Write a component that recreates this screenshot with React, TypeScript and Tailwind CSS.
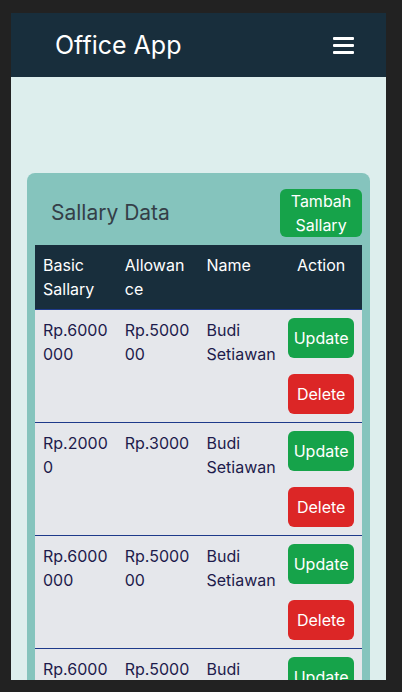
type Sallary = {
  basic: string;
  allowance: string;
  name: string;
};

const rows: Sallary[] = [
  { basic: "Rp.6000000", allowance: "Rp.500000", name: "Budi Setiawan" },
  { basic: "Rp.20000", allowance: "Rp.3000", name: "Budi Setiawan" },
  { basic: "Rp.6000000", allowance: "Rp.500000", name: "Budi Setiawan" },
  { basic: "Rp.6000000", allowance: "Rp.500000", name: "Budi Setiawan" },
];

function Navbar() {
  return (
    <nav className="flex h-16 shrink-0 items-center justify-between bg-[#182e3c] pl-11 pr-8">
      <span className="text-[25px] leading-8 text-white">Office App</span>
      <button aria-label="Menu" className="flex w-[21px] flex-col gap-1">
        <span className="block h-[3px] w-full rounded-[1px] bg-white" />
        <span className="block h-[3px] w-full rounded-[1px] bg-white" />
        <span className="block h-[3px] w-full rounded-[1px] bg-white" />
      </button>
    </nav>
  );
}

export default function App() {
  return (
    <div className="h-[692px] w-[402px] overflow-hidden bg-[#222222] pl-[11px] pt-[13px] font-['Inter',sans-serif]">
      <div className="flex h-[667px] w-[375px] flex-col overflow-hidden bg-[#ddeeed]">
        <Navbar />
        <main className="px-4 pt-24">
          <div className="rounded-lg bg-[#85c4bd] px-2 pt-4 pb-4">
            <div className="flex items-center justify-between">
              <h2 className="pl-4 text-[21px] leading-7 text-[#343f48]">Sallary Data</h2>
              <button className="w-[82px] rounded-md bg-[#16a34a] px-1 text-base leading-6 text-white">
                Tambah Sallary
              </button>
            </div>
            <table className="mt-2 w-full table-fixed border-collapse text-base leading-6">
              <thead>
                <tr className="border-b border-[#1e3a8a] bg-[#182e3c] text-white">
                  <th className="break-words px-2 py-2 text-left align-top font-normal">Basic Sallary</th>
                  <th className="break-words px-2 py-2 text-left align-top font-normal">Allowance</th>
                  <th className="break-words px-2 py-2 text-left align-top font-normal">Name</th>
                  <th className="px-2 py-2 text-center align-top font-normal">Action</th>
                </tr>
              </thead>
              <tbody>
                {rows.map((r, i) => (
                  <tr key={i} className="border-b border-[#1e3a8a] bg-[#e5e7eb] text-[#1e1b4b]">
                    <td className="break-words px-2 py-2 align-top">{r.basic}</td>
                    <td className="break-words px-2 py-2 align-top">{r.allowance}</td>
                    <td className="px-2 py-2 align-top">{r.name}</td>
                    <td className="px-2 py-2 align-top">
                      <div className="flex flex-col gap-4">
                        <button className="h-10 w-full rounded-md bg-[#16a34a] text-white">Update</button>
                        <button className="h-10 w-full rounded-md bg-[#dc2626] text-white">Delete</button>
                      </div>
                    </td>
                  </tr>
                ))}
              </tbody>
            </table>
          </div>
        </main>
      </div>
    </div>
  );
}
